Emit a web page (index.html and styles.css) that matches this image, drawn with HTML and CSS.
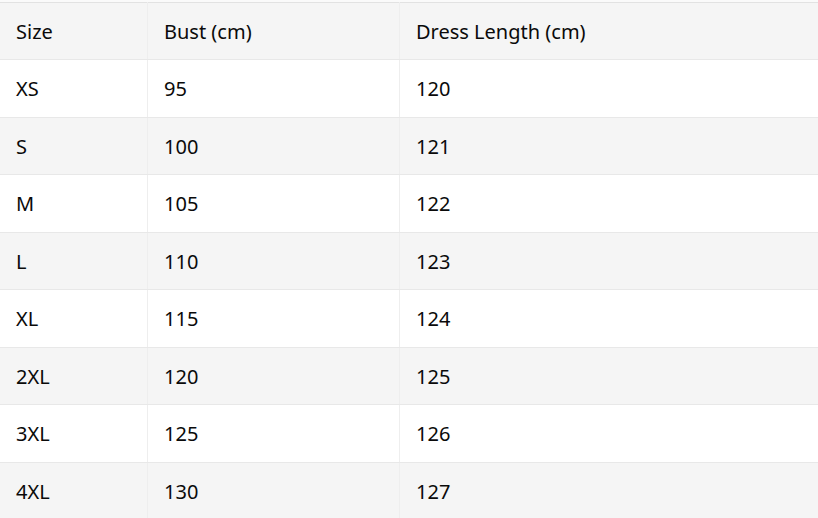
FILE: index.html
```html
<!DOCTYPE html>
<html>
<head>
<meta charset="utf-8">
<link rel="stylesheet" href="styles.css">
</head>
<body>
<div class="top"></div>
<table class="size-table">
  <thead>
    <tr><th>Size</th><th>Bust (cm)</th><th>Dress Length (cm)</th></tr>
  </thead>
  <tbody>
    <tr><td>XS</td><td>95</td><td>120</td></tr>
    <tr><td>S</td><td>100</td><td>121</td></tr>
    <tr><td>M</td><td>105</td><td>122</td></tr>
    <tr><td>L</td><td>110</td><td>123</td></tr>
    <tr><td>XL</td><td>115</td><td>124</td></tr>
    <tr><td>2XL</td><td>120</td><td>125</td></tr>
    <tr><td>3XL</td><td>125</td><td>126</td></tr>
    <tr><td>4XL</td><td>130</td><td>127</td></tr>
  </tbody>
</table>
</body>
</html>
```
FILE: styles.css
```css
html, body {
  margin: 0;
  padding: 0;
  background: #ffffff;
}
.top {
  height: 1.5px;
  background: #fafafa;
}
.size-table {
  width: 818px;
  border-collapse: collapse;
  font-family: "Noto Sans", "Open Sans", sans-serif;
  font-size: 20px;
  color: #0a0a0a;
  border-top: 1px solid #e2e2e2;
}
.size-table th,
.size-table td {
  text-align: left;
  font-weight: normal;
  padding: 17px 16px 15px;
  line-height: 24.5px;
  border-bottom: 1px solid #e8e8e8;
  border-right: 1px solid #eeeeee;
}
.size-table th:first-child,
.size-table td:first-child {
  width: 115px;
}
.size-table th:nth-child(2),
.size-table td:nth-child(2) {
  width: 219px;
}
.size-table th:last-child,
.size-table td:last-child {
  border-right: none;
}
.size-table thead tr {
  background: #f5f5f5;
}
.size-table tbody tr:nth-child(even) {
  background: #f5f5f5;
}
.size-table tbody tr:nth-child(odd) {
  background: #ffffff;
}
```
